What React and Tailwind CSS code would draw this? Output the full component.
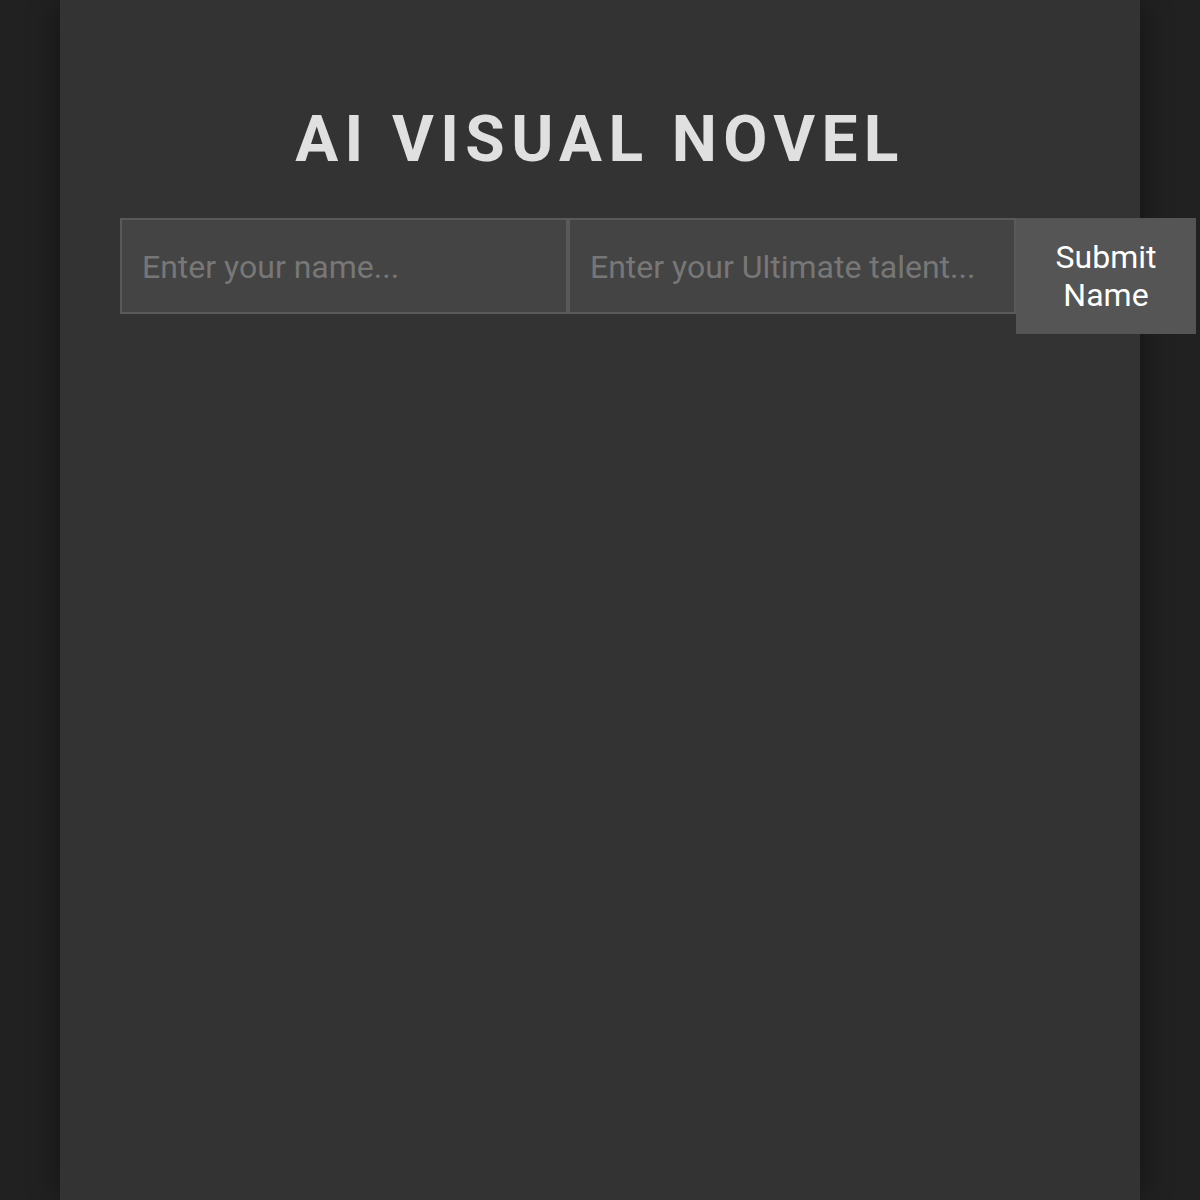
import React, { useState } from 'react';

const App = () => {
    const [name, setName] = useState('');
    const [talent, setTalent] = useState('');

    return (
        <div className="min-h-screen bg-[#212121] font-['Roboto',sans-serif]">
            <div className="mx-auto w-[1080px] min-h-[1200px] bg-[#333333] px-[60px] pt-[102px] shadow-[0_0_30px_rgba(0,0,0,0.45)]">
                <h1 className="text-center text-[64px] leading-[75px] font-bold tracking-[0.1em] text-[#e0e0e0]">
                    AI VISUAL NOVEL
                </h1>

                {/* Name form */}
                <div className="mt-[41px] flex items-start">
                    <input
                        type="text"
                        placeholder="Enter your name..."
                        value={name}
                        onChange={(e) => setName(e.target.value)}
                        className="h-[96px] w-[448px] shrink-0 border-2 border-[#5a5a5a] bg-[#444444] px-[20px] pt-[2px] text-[32px] text-white placeholder:text-[#777777] outline-none"
                    />
                    <input
                        type="text"
                        placeholder="Enter your Ultimate talent..."
                        value={talent}
                        onChange={(e) => setTalent(e.target.value)}
                        className="h-[96px] w-[448px] shrink-0 border-2 border-[#5a5a5a] bg-[#444444] px-[20px] pt-[2px] text-[32px] text-white placeholder:text-[#777777] outline-none"
                    />
                    <button className="h-[116px] w-[180px] shrink-0 bg-[#555555] px-[20px] text-[32px] leading-[38px] text-white">
                        Submit Name
                    </button>
                </div>
            </div>
        </div>
    );
};

export default App;
